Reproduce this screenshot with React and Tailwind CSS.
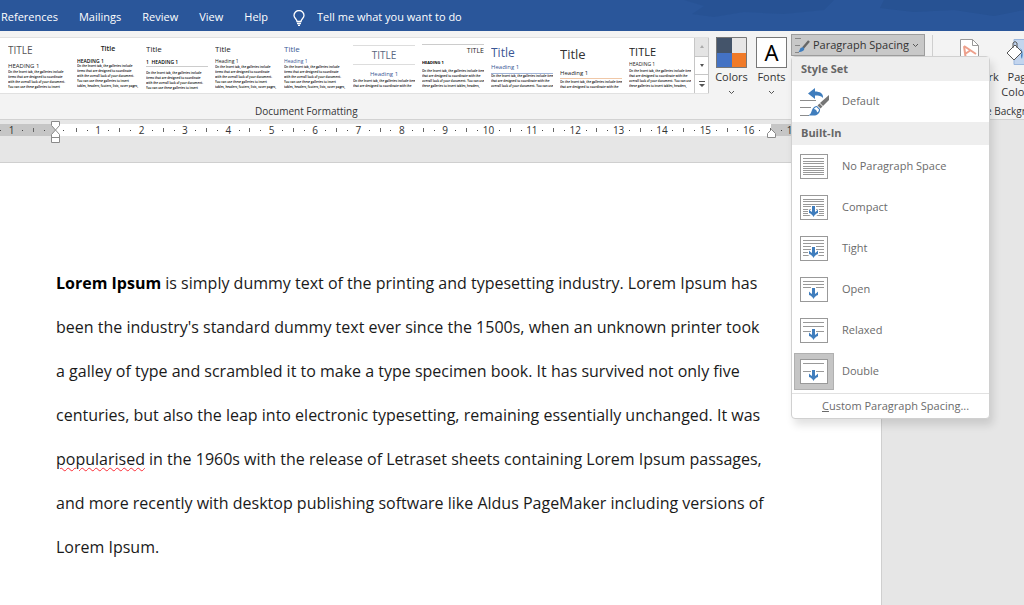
import React, { useState } from 'react';

const tabs = ['References', 'Mailings', 'Review', 'View', 'Help'];

const shortBody = ['On the Insert tab, the galleries include', 'items that are designed to coordinate', 'with the overall look of your document.', 'You can use these galleries to insert', 'tables, headers, footers, lists, cover pages,'];
const wideBody = ['On the Insert tab, the galleries include items', 'that are designed to coordinate with the', 'overall look of your document. You can use', 'these galleries to insert tables, headers,'];

const styleSets = [
    { title: 'TITLE', heading: 'HEADING 1', body: shortBody.slice(0, 4), titleClass: 'text-[10px] leading-[15px] pt-1 pb-1 text-[#555]', headingClass: 'text-[6px] leading-[8px] text-[#222]' },
    { title: 'Title', heading: 'HEADING 1', body: shortBody, titleClass: 'text-[7px] leading-[10px] pt-1 pb-1 text-center font-semibold text-[#222]', headingClass: 'text-[5px] leading-[6px] font-semibold text-black' },
    { title: 'Title', heading: '1  HEADING 1', body: shortBody.slice(0, 4), titleClass: 'text-[8px] leading-[11px] pt-1 pb-1 text-[#222]', headingClass: 'text-[5px] leading-[8px] font-semibold text-black border-b border-[#ccc] mb-1 whitespace-pre' },
    { title: 'Title', heading: 'Heading 1', body: shortBody, titleClass: 'text-[8px] leading-[11px] pt-1 text-[#222]', headingClass: 'text-[5px] leading-[7px] pt-1 text-[#222]' },
    { title: 'Title', heading: 'Heading 1', body: shortBody, titleClass: 'text-[8px] leading-[11px] pt-1 text-[#3a5795]', headingClass: 'text-[5px] leading-[7px] pt-1 text-[#3a5795]' },
    { title: 'TITLE', heading: 'Heading 1', body: wideBody.slice(0, 2), titleClass: 'mt-1 mb-1 text-[10px] leading-[18px] border-y border-[#ddd] text-center text-[#5a6780]', headingClass: 'text-[6px] leading-[10px] text-center text-[#3a5795]' },
    { title: 'TITLE', heading: 'HEADING 1', body: wideBody, titleClass: 'mt-1 text-[7px] leading-[12px] border-t border-[#ccc] text-right text-[#222]', headingClass: 'text-[4px] leading-[12px] font-bold text-black' },
    { title: 'Title', heading: 'Heading 1', body: wideBody.slice(0, 3), titleClass: 'text-[12px] leading-[17px] pt-1 text-[#3a5795]', headingClass: 'text-[6px] leading-[12px] border-b border-[#9fb3d6] text-[#3a5795]' },
    { title: 'Title', heading: 'Heading 1', body: wideBody.slice(0, 2), titleClass: 'text-[13px] leading-[20px] pt-1 pb-1 text-[#333]', headingClass: 'text-[6px] leading-[10px] border-b border-[#f0c8a8] mb-px text-[#222]' },
    { title: 'TITLE', heading: 'HEADING 1', body: wideBody, titleClass: 'text-[11px] leading-[16px] pt-1 text-[#222]', headingClass: 'text-[5px] leading-[9px] text-[#222]' },
];

const spacings = [
    { name: 'No Paragraph Space', lines: [4, 7, 9, 12, 14, 16, 18, 20], arrow: false },
    { name: 'Compact', lines: [4, 6, 9, 11, 14, 16, 18, 20], arrow: true },
    { name: 'Tight', lines: [4, 7, 10, 13, 16, 19], arrow: true },
    { name: 'Open', lines: [4, 7, 10], arrow: true },
    { name: 'Relaxed', lines: [4, 8, 13], arrow: true },
    { name: 'Double', lines: [4, 12], arrow: true },
];

const Chevron = () => (
    <svg className="inline w-[7px] h-[5px]" viewBox="0 0 7 5" fill="none" stroke="#555">
        <path d="M1 1l2.5 2.5L6 1" />
    </svg>
);

const SpacingIcon = ({ lines, arrow }) => (
    <svg className="w-7 h-[25px] shrink-0" viewBox="0 0 28 25">
        <rect x="0.5" y="0.5" width="27" height="24" fill="#fff" stroke="#999" />
        {lines.map((y) => (
            <path key={y} d={`M3 ${y + 0.5}H24`} stroke="#999" />
        ))}
        {arrow && (
            <>
                <path d="M11 10h5v5l3-1v5l-5.500 4L8 19v-5l3 1z" fill="#fff" />
                <path d="M12 11h3v6c1-.6 2-1.200 3-2.500v3.500c-2 .6-3.500 2-4.500 4-1-2-2.500-3.400-4.500-4v-3.500c1 1.300 2 1.900 3 2.500z" fill="#3f7dbd" />
            </>
        )}
    </svg>
);

const BrushIcon = () => (
    <svg className="w-[15px] h-4" viewBox="0 0 15 16">
        <path d="M0 1.500h6M0 8.500h5M0 15.500h4" stroke="#888" />
        <path d="M14 4L8 11" stroke="#666" strokeWidth="2.400" />
        <path d="M8.500 10.500c1 1 1 2 0 3-1.500 1.500-3.500 1.500-5 1.500 1-1 1-2 1.500-3s2-2 3.500-1.500z" fill="#3f7dbd" />
    </svg>
);

const DefaultIcon = () => (
    <svg className="w-[30px] h-7 shrink-0" viewBox="0 0 30 28">
        <path d="M0 12.500h16M0 19.500h11M0 27.500h9" stroke="#8c8c8c" />
        <path d="M8 5.500L15 0v3.500c5 0 8.500 2 8 6.500-1.500-2-4-2.500-8-2.500V11z" fill="#3f7dbd" />
        <path d="M29 7v5l-6 6-3-3z" fill="#757575" />
        <path d="M19.500 15.500l3 3-2 2-3-3z" fill="#757575" />
        <path d="M17 18l3 3c.500 3-2 6-5 6.500H8c3-1 3-3 4-5.500s3-4 5-4z" fill="#3f7dbd" />
        <path d="M16.500 19l2.500 2.500c0 1.500-1 2.500-2 3 0-2-1-3-3-3.500.500-1 1.500-2 2.500-2z" fill="#fff" />
    </svg>
);

const StylePreview = ({ set }) => (
    <button aria-label={set.title} className="w-[62px] h-[53px] shrink-0 overflow-hidden text-left">
        <div className={set.titleClass}>{set.title}</div>
        <div className={set.headingClass}>{set.heading}</div>
        <div className="text-[3px] leading-[5px] font-semibold text-black whitespace-nowrap">
            {set.body.map((line) => (
                <div key={line}>{line}</div>
            ))}
        </div>
    </button>
);

const RulerCell = ({ label }) => (
    <div className="flex-1 grid grid-cols-4 items-center justify-items-center">
        <span className="w-px h-1 bg-[#666]"></span>
        <span className="w-px h-px bg-[#444]"></span>
        <span className="w-0 flex justify-center">{label}</span>
        <span className="w-px h-px bg-[#444]"></span>
    </div>
);

const SpacingMenu = ({ selected, onSelect }) => (
    <div className="absolute top-full left-0 z-10 w-[199px] bg-white border border-[#d0d0d0] rounded-sm shadow-[3px_6px_8px_rgba(0,0,0,0.12)] text-[11px] text-[#6b6b6b]">
        <h2 className="h-6 px-[9px] flex items-center bg-[#eee] font-bold text-[#666]">Style Set</h2>
        <button className="w-full h-[41px] pl-2 flex items-center gap-3 text-left">
            <DefaultIcon />
            Default
        </button>
        <h2 className="h-[23px] px-[9px] flex items-center bg-[#eee] font-bold text-[#666]">Built-In</h2>
        <ul className="py-px">
            {spacings.map((item) => (
                <li key={item.name}>
                    <button onClick={() => onSelect(item.name)} className="w-full h-[41px] pl-[2px] flex items-center gap-2 text-left">
                        <span className={item.name === selected ? 'p-[5px] bg-[#c5c5c5] border border-[#b0b0b0]' : 'p-[5px] border border-transparent'}>
                            <SpacingIcon lines={item.lines} arrow={item.arrow} />
                        </span>
                        {item.name}
                    </button>
                </li>
            ))}
        </ul>
        <button className="w-full h-[25px] pl-[30px] text-left border-t border-[#e1e1e1]">
            <u>C</u>ustom Paragraph Spacing...
        </button>
    </div>
);

const App = () => {
    const [selected, setSelected] = useState('Double');

    return (
        <div className="min-h-screen flex flex-col overflow-hidden bg-[#e6e6e6] font-['Open_Sans',sans-serif] text-[11px] text-[#333]">
            {/* tab bar */}
            <header className="relative h-[31px] bg-[#2a569a] text-white">
                <svg className="absolute top-0 right-0 w-[340px] h-5" viewBox="0 0 340 20" fill="#234d8c">
                    <path d="M0 0H150L140 10 100 14 60 12 30 17 8 14 20 6z" opacity="0.4" />
                    <path d="M200 0H340V10L310 16 270 10 230 12 196 8z" opacity="0.5" />
                </svg>
                <nav className="relative h-full pt-1 pl-px flex items-center gap-[21px] text-[11px]">
                    {tabs.map((tab) => (
                        <a key={tab} href="#">{tab}</a>
                    ))}
                    <label className="pl-1 flex flex-1 items-center gap-3">
                        <svg className="w-3 h-4" viewBox="0 0 12 16" fill="none" stroke="#fff" strokeWidth="1.300">
                            <path d="M4 11.500C4 9 1 8.500 1 5.500a5 5 0 0 1 10 0C11 8.500 8 9 8 11.500zM4 13.500h4M5 15.300h2" />
                        </svg>
                        <input className="flex-1 bg-transparent placeholder:text-white outline-none" placeholder="Tell me what you want to do" />
                    </label>
                </nav>
            </header>

            {/* ribbon */}
            <section className="h-[89px] flex bg-[#f3f3f3] border-b border-[#d2d2d2]">
                <div className="flex-1 min-w-0 flex flex-col justify-between">
                    <div className="flex items-start">
                        <div className="mt-[6px] h-[57px] flex-1 min-w-0 flex border-y border-[#e1e1e1] bg-white">
                            <div className="flex-1 min-w-0 pl-2 flex gap-[7px] overflow-hidden">
                                {styleSets.map((set, index) => (
                                    <StylePreview key={index} set={set} />
                                ))}
                            </div>
                            <div className="w-[15px] flex flex-col border-x border-[#c6c6c6] divide-y divide-[#c6c6c6]">
                                <button aria-label="Previous row" className="flex-1 flex items-center justify-center bg-[#e4e4e4]">
                                    <svg className="w-1 h-[3px]" viewBox="0 0 4 3"><path d="M0 3l2-3 2 3z" fill="#aaa" /></svg>
                                </button>
                                <button aria-label="Next row" className="flex-1 flex items-center justify-center">
                                    <svg className="w-1 h-[3px]" viewBox="0 0 4 3"><path d="M0 0h4L2 3z" fill="#555" /></svg>
                                </button>
                                <button aria-label="More" className="flex-1 flex items-center justify-center">
                                    <svg className="w-[6px] h-[6px]" viewBox="0 0 6 6"><path d="M0 0h6v1H0zM0 3h6L3 6z" fill="#555" /></svg>
                                </button>
                            </div>
                        </div>
                        <button className="mt-[6px] w-[45px] flex flex-col items-center">
                            <svg className="w-[31px] h-[31px]" viewBox="0 0 31 31">
                                <path d="M0 0h16v16H0z" fill="#44546a" />
                                <path d="M16 0h15v16H16z" fill="#e7e6e6" />
                                <path d="M0 16h16v15H0z" fill="#4472c4" />
                                <path d="M16 16h15v15H16z" fill="#f07a28" />
                                <path d="M.5.5h30v30H.5z" fill="none" stroke="#777" />
                            </svg>
                            <span className="pt-px pb-1">Colors</span>
                            <Chevron />
                        </button>
                        <button className="mt-[6px] w-[35px] flex flex-col items-center">
                            <span className="w-[31px] h-[31px] flex items-center justify-center border border-[#777] bg-white text-[22px] text-black font-['Noto_Sans',sans-serif]">A</span>
                            <span className="pt-px pb-1">Fonts</span>
                            <Chevron />
                        </button>
                        <div className="relative mt-[3px] ml-[2px] mr-[7px]">
                            <button className="w-[134px] h-[22px] pl-[3px] flex items-center gap-[3px] border border-[#9d9d9d] bg-[#c8c8c8] whitespace-nowrap">
                                <BrushIcon />
                                Paragraph Spacing
                                <Chevron />
                            </button>
                            <SpacingMenu selected={selected} onSelect={setSelected} />
                        </div>
                    </div>
                    <p className="pl-[255px] text-[10px] leading-4">Document Formatting</p>
                </div>
                <div className="w-[92px] mt-1 flex flex-col justify-between border-l border-[#cfcfcf] overflow-hidden whitespace-nowrap">
                    <div className="pt-[3px] pl-2 flex items-start gap-px">
                        <button className="w-[58px] shrink-0 flex flex-col items-center">
                            <svg className="w-5 h-[31px]" viewBox="0 0 20 31">
                                <path d="M.5 1.500h12l6 6v22H.5z" fill="#fff" stroke="#999" />
                                <path d="M12.500 1.500v6h6" fill="none" stroke="#999" />
                                <path d="M4 8l2 14M4 8l12 8M5 16l6-4" fill="none" stroke="#eda08c" strokeWidth="2" />
                            </svg>
                            Watermark
                        </button>
                        <button className="w-10 shrink-0 flex flex-col items-center">
                            <svg className="w-[30px] h-[31px]" viewBox="0 0 30 31">
                                <path d="M9 1.500h20v25H9z" fill="#c3d5ee" stroke="#9bb7dd" />
                                <path d="M2 15l8-8 7 7-8 8z" fill="#fff" stroke="#555" />
                                <path d="M8 10V5q2-3 4 0v5" fill="none" stroke="#555" />
                                <path d="M15 10q4 3 2 11-2-3 0-7z" fill="#3f7dbd" />
                            </svg>
                            <span className="leading-[15px]">Page<br />Color <Chevron /></span>
                        </button>
                    </div>
                    <p className="pl-9 text-[10px] leading-4">Page Background</p>
                </div>
            </section>

            {/* ruler */}
            <div className="relative mt-1 h-3 flex text-[10px] leading-3">
                <div className="w-[55px] flex items-center bg-[#c6c6c6]">
                    <div className="w-[44px] shrink-0 flex ml-[-16px]"><RulerCell label="1" /></div>
                    <div className="w-[22px] grid grid-cols-2 items-center justify-items-center">
                        <span className="w-px h-1 bg-[#666]"></span>
                        <span className="w-px h-px bg-[#444]"></span>
                    </div>
                </div>
                <div className="w-[716px] flex bg-white">
                    <span className="w-4 flex items-center justify-center"><span className="w-px h-px bg-[#444]"></span></span>
                    {Array.from({ length: 16 }, (_, i) => (
                        <RulerCell key={i} label={i + 1} />
                    ))}
                    <span className="w-[6px]"></span>
                </div>
                <div className="w-[111px] flex bg-[#c6c6c6]">
                    <div className="w-[44px] flex ml-[-6px]"><RulerCell label="17" /></div>
                </div>
                <svg className="absolute left-[51px] -top-[3px] w-[9px] h-[22px]" viewBox="0 0 9 22" fill="#fff" stroke="#8a8a8a">
                    <path d="M.5.5h8v4L4.500 9 .5 4.500z" />
                    <path d="M.5 21.500v-8l4-4.500 4 4.500v8zM.5 16.500h8" />
                </svg>
                <svg className="absolute left-[767px] top-[5px] w-[9px] h-[9px]" viewBox="0 0 9 9" fill="#fff" stroke="#8a8a8a">
                    <path d="M.5 8.500v-4l4-4 4 4v4z" />
                </svg>
            </div>

            {/* document */}
            <main className="mt-[26px] flex-1 max-w-[882px] pt-[98px] pl-14 border-t border-r border-[#cfcfcf] bg-white">
                <p className="max-w-[712px] text-[16px] leading-[44px] text-[#1a1a1a]">
                    <strong className="text-black">Lorem Ipsum</strong> is simply dummy text of the printing and typesetting industry. Lorem Ipsum has been the industry's standard dummy text ever since the 1500s, when an unknown printer took a galley of type and scrambled it to make a type specimen book. It has survived not only five centuries, but also the leap into electronic typesetting, remaining essentially unchanged. It was <span className="underline decoration-wavy decoration-red-500 decoration-1 underline-offset-2">popularised</span> in the 1960s with the release of Letraset sheets containing Lorem Ipsum passages, and more recently with desktop publishing software like Aldus PageMaker including versions of Lorem Ipsum.
                </p>
            </main>
        </div>
    );
};

export default App;
